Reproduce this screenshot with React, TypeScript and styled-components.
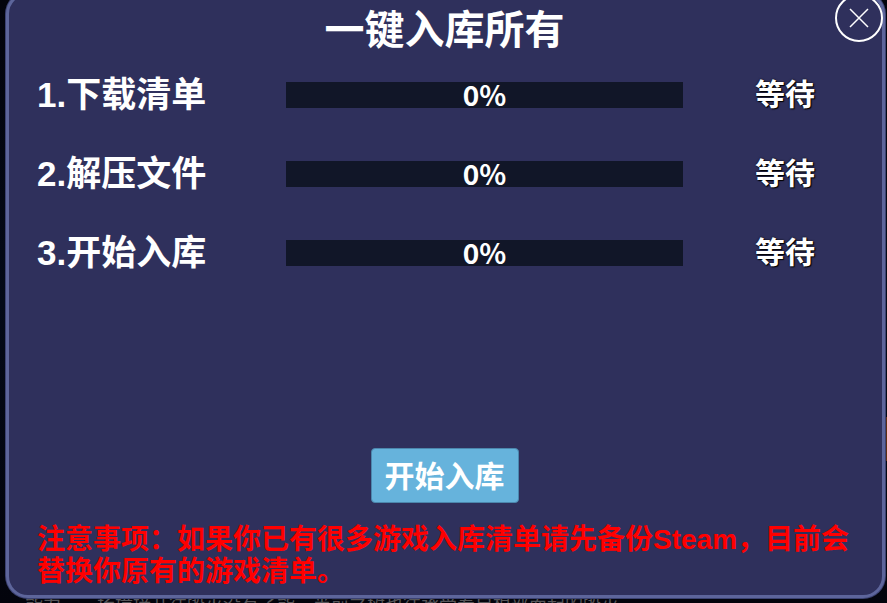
import React from "react";
import styled, { createGlobalStyle } from "styled-components";

const GlobalStyle = createGlobalStyle`
  * { box-sizing: border-box; }
  html, body, #root { height: 100%; }
  body {
    margin: 0;
    overflow: hidden;
    background: #03040c;
    font-family: "Liberation Sans", "Noto Sans CJK SC", sans-serif;
  }
`;

const Backdrop = styled.div`
  position: relative;
  display: flex;
  height: 100%;
  overflow: hidden;
  background: linear-gradient(#03040c, #040a18 50%, #03040c);
`;

const PageText = styled.p`
  position: absolute;
  left: 25px;
  bottom: -12px;
  margin: 0;
  color: #56565a;
  font-size: 18px;
  line-height: 20px;
  white-space: nowrap;
`;

const PageAccent = styled.span`
  position: absolute;
  right: 0;
  top: 417px;
  width: 2px;
  height: 44px;
  background: #5e2c10;
`;

const Dialog = styled.section`
  position: relative;
  display: flex;
  flex: 1;
  flex-direction: column;
  margin: -8px 2px 5px 6px;
  padding: 13px 30px 7px 28px;
  border: 3px solid #5d659b;
  border-radius: 22px;
  background: #2f305c;
  box-shadow: 0 0 0 1px #3c4272;
`;

const Title = styled.h1`
  margin: 0;
  color: #fff;
  font-size: 40px;
  line-height: 44px;
  text-align: center;
`;

const CloseButton = styled.button`
  position: absolute;
  top: -1px;
  right: -1px;
  width: 48px;
  height: 48px;
  padding: 0;
  border: 0;
  background: none;
  cursor: pointer;

  svg { display: block; }
`;

const Steps = styled.ol`
  display: grid;
  gap: 39px;
  margin: 22px 0 0;
  padding: 0;
  list-style: none;
`;

const Step = styled.li`
  display: grid;
  grid-template-columns: 249px 1fr 169px;
  align-items: center;
  height: 40px;
`;

const StepName = styled.span`
  color: #fff;
  font-size: 35px;
  font-weight: 700;
  line-height: 40px;
  white-space: nowrap;
`;

const Track = styled.div`
  position: relative;
  height: 26px;
  background: #111628;
`;

const Fill = styled.div`
  height: 100%;
  background: #66b3dc;
`;

const Percent = styled.span`
  position: absolute;
  inset: 0;
  color: #fff;
  font-family: "Noto Sans CJK SC", sans-serif;
  font-size: 28px;
  font-weight: 700;
  line-height: 24px;
  text-align: center;
`;

const Status = styled.span`
  padding-left: 72px;
  color: #fff;
  font-size: 30px;
  font-weight: 700;
  line-height: 42px;
  text-shadow: 0 0 2px #000, 1px 1px 1px #000;
`;

const StartButton = styled.button`
  align-self: center;
  margin-top: auto;
  padding: 2px 13px 0;
  border: 1px solid #4c87ad;
  border-radius: 4px;
  background: #66b3dc;
  color: #fff;
  font: 700 30px/51px "Liberation Sans", "Noto Sans CJK SC", sans-serif;
  cursor: pointer;
`;

const Notice = styled.p`
  margin: 21px 0 0;
  color: #f00;
  font-size: 28px;
  font-weight: 700;
  line-height: 32px;
`;

const steps = [
  { name: "下载清单", progress: 0, status: "等待" },
  { name: "解压文件", progress: 0, status: "等待" },
  { name: "开始入库", progress: 0, status: "等待" },
];

export default function App() {
  return (
    <>
      <GlobalStyle />
      <Backdrop>
        <PageText>能力、一场撞接开往毁灭没有了能，半前之树也往承受着自根部而起的毁灭。</PageText>
        <PageAccent />
        <Dialog role="dialog" aria-labelledby="dialog-title">
          <Title id="dialog-title">一键入库所有</Title>
          <CloseButton type="button" aria-label="关闭">
            <svg width="48" height="48" viewBox="0 0 48 48" fill="none" stroke="#fff">
              <circle cx="24" cy="24" r="23" strokeWidth="2" />
              <path d="M15 15 33 33M33 15 15 33" strokeWidth="1.5" />
            </svg>
          </CloseButton>
          <Steps>
            {steps.map((step, index) => (
              <Step key={step.name}>
                <StepName>{`${index + 1}.${step.name}`}</StepName>
                <Track role="progressbar" aria-label={step.name} aria-valuenow={step.progress}>
                  <Fill style={{ width: `${step.progress}%` }} />
                  <Percent>{`${step.progress}%`}</Percent>
                </Track>
                <Status>{step.status}</Status>
              </Step>
            ))}
          </Steps>
          <StartButton type="button">开始入库</StartButton>
          <Notice>
            注意事项：如果你已有很多游戏入库清单请先备份Steam，目前会替换你原有的游戏清单。
          </Notice>
        </Dialog>
      </Backdrop>
    </>
  );
}
